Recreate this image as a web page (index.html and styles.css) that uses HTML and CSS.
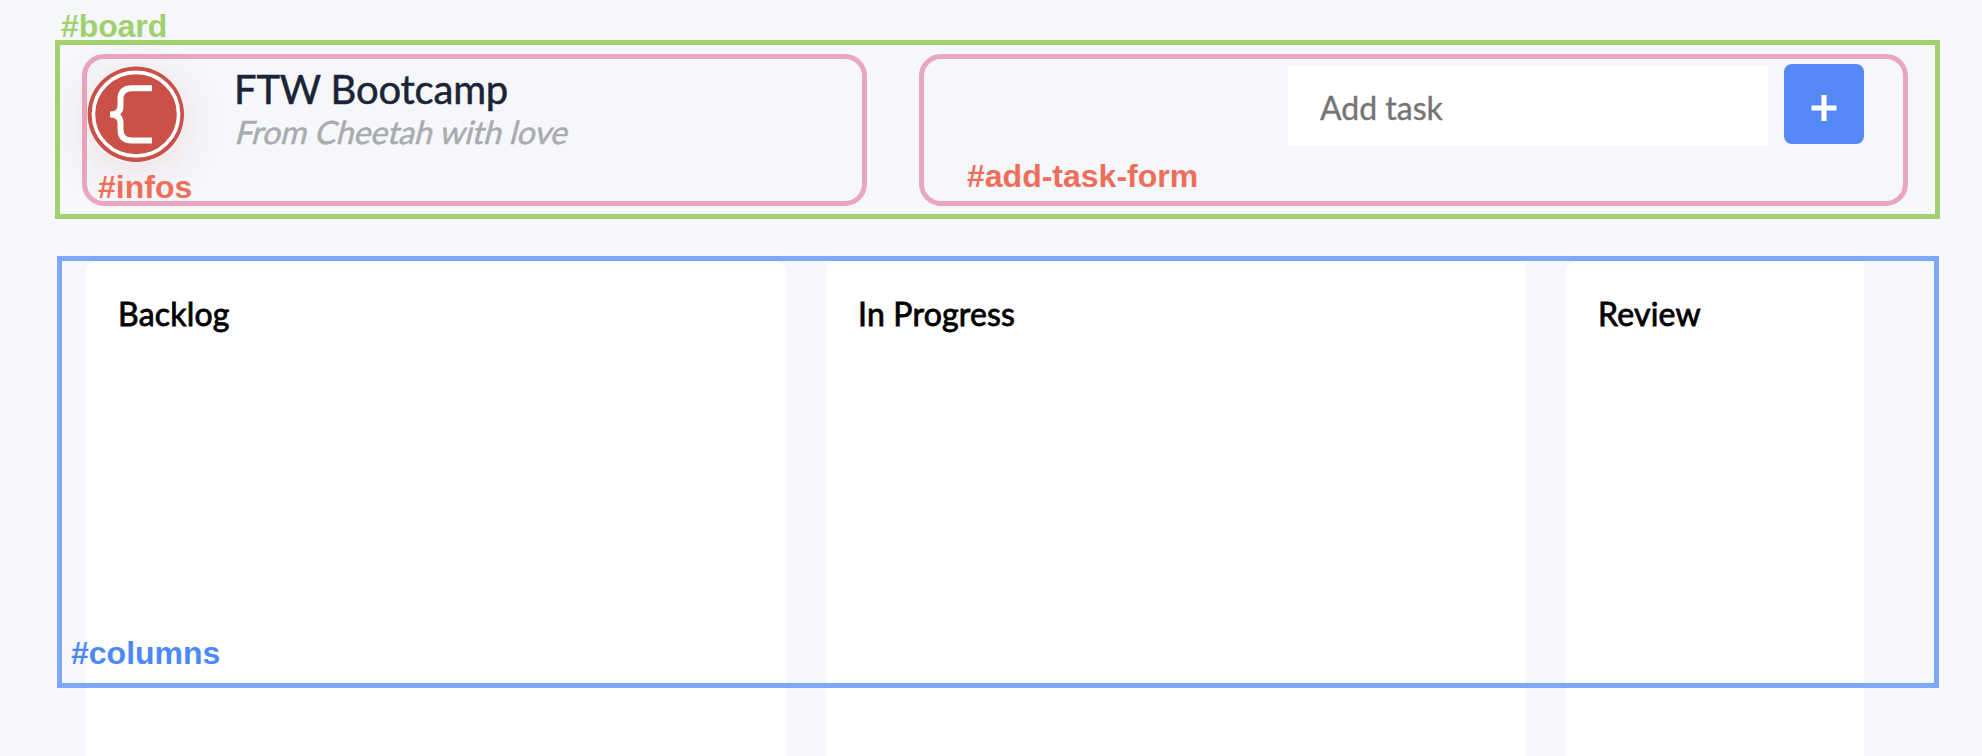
FILE: index.html
```html
<!DOCTYPE html>
<html lang="en">
<head>
<meta charset="utf-8">
<title>FTW Bootcamp</title>
<link rel="stylesheet" href="styles.css">
</head>
<body>
<main class="page">
  <header class="board">
    <span class="label label-board">#board</span>
    <section class="infos">
      <svg class="logo" viewBox="0 0 97 97">
        <ellipse cx="49" cy="48.200" rx="48.400" ry="47.700" fill="#c95148"/>
        <ellipse cx="49" cy="48.200" rx="42.600" ry="41.800" fill="none" stroke="#fff" stroke-width="3.600"/>
        <path d="M65 22.200H45C37 22.200 33.500 26 33.500 33v7c0 5-3 8.500-10.500 8.500 7.500 0 10.500 3.500 10.500 8.500v6.500c0 7 3.500 11 11.500 11H65" fill="none" stroke="#fff" stroke-width="6"/>
      </svg>
      <div class="titles">
        <h1 class="title">FTW Bootcamp</h1>
        <p class="subtitle">From Cheetah with love</p>
      </div>
      <span class="label label-infos">#infos</span>
    </section>
    <form class="add-task-form">
      <input class="task-input" type="text" placeholder="Add task">
      <button class="add-button" type="button" aria-label="Add task">
        <svg class="plus" viewBox="0 0 26 26"><path d="M13 0v26M.5 13h25" stroke="#fff" stroke-width="5"/></svg>
      </button>
      <span class="label label-form">#add-task-form</span>
    </form>
  </header>
  <section class="columns">
    <div class="column"><h2 class="column-title">Backlog</h2></div>
    <div class="column"><h2 class="column-title">In Progress</h2></div>
    <div class="column"><h2 class="column-title">Review</h2></div>
  </section>
  <div class="columns-outline"><span class="label label-columns">#columns</span></div>
</main>
</body>
</html>
```

FILE: styles.css
```css
* { box-sizing: border-box; }

body {
  margin: 0;
  background: #f5f7fb;
  font-family: Lato, "Liberation Sans", sans-serif;
}

.page {
  position: relative;
  display: flex;
  flex-direction: column;
  height: 756px;
  overflow: hidden;
  padding: 40px 42px 0 55px;
}

.board {
  position: relative;
  display: flex;
  gap: 52px;
  width: 1885px;
  height: 179px;
  flex: none;
  padding: 9px 27px 8px 22px;
  border: 5px solid #a1d16f;
}

.infos,
.add-task-form {
  position: relative;
  display: flex;
  align-items: flex-start;
  height: 152px;
  border: 5px solid #e9a6bf;
  border-radius: 22px;
}

.infos {
  width: 785px;
  gap: 50px;
  padding-top: 6px;
}

.logo {
  flex: none;
  width: 97px;
  height: 97px;
  margin-top: 1px;
  border-radius: 50%;
  box-shadow: 0 8px 40px rgba(201, 81, 72, 0.15);
}

.title {
  margin: 0;
  font-size: 40px;
  line-height: 48px;
  font-weight: 400;
  letter-spacing: -0.2px;
  color: #1b2437;
  -webkit-text-stroke: 0.5px #1b2437;
}

.subtitle {
  margin: 0;
  font-size: 32px;
  line-height: 38px;
  letter-spacing: -0.1px;
  color: #aaabae;
  -webkit-text-stroke: 0.5px #aaabae;
  transform: skewX(-14deg);
  transform-origin: 0 31px;
}

.add-task-form {
  width: 989px;
  justify-content: flex-end;
  gap: 16px;
  padding: 5px 39px 0 0;
}

.task-input {
  width: 480px;
  height: 80px;
  margin: 2px 0 0;
  padding: 2px 32px 0;
  border: 0;
  background: #fff;
  font: 400 32px Lato, "Liberation Sans", sans-serif;
}

.task-input::placeholder {
  color: #757575;
  -webkit-text-stroke: 0.4px #757575;
}

.add-button {
  display: flex;
  align-items: center;
  justify-content: center;
  width: 80px;
  height: 80px;
  padding: 8px 0 0;
  border: 0;
  border-radius: 8px;
  background: #5588f7;
}

.plus {
  width: 26px;
  height: 26px;
}

.columns {
  display: flex;
  gap: 40px;
  width: 1778px;
  height: 494px;
  flex: none;
  margin: 43px 0 0 31px;
  overflow: hidden;
}

.column {
  flex: none;
  width: 700px;
  height: 600px;
  padding: 32px;
  border-radius: 8px;
  background: #fff;
}

.column-title {
  margin: 0;
  font-size: 32px;
  line-height: 40px;
  font-weight: 400;
  letter-spacing: 0.2px;
  color: #000;
  -webkit-text-stroke: 0.8px #000;
}

.columns-outline {
  position: absolute;
  left: 57px;
  top: 256px;
  width: 1882px;
  height: 432px;
  border: 5px solid #7da7f9;
}

.label {
  position: absolute;
  font: 700 32px/36px "Liberation Sans", Arial, sans-serif;
  white-space: nowrap;
}

.label-board { left: 1px; top: -37px; letter-spacing: -0.1px; color: #a1d16f; }
.label-infos { left: 11px; top: 110px; color: #ee6e5a; }
.label-form { left: 43px; top: 99px; color: #ee6e5a; }
.label-columns { left: 9px; top: 374px; color: #4d88f7; }
```
